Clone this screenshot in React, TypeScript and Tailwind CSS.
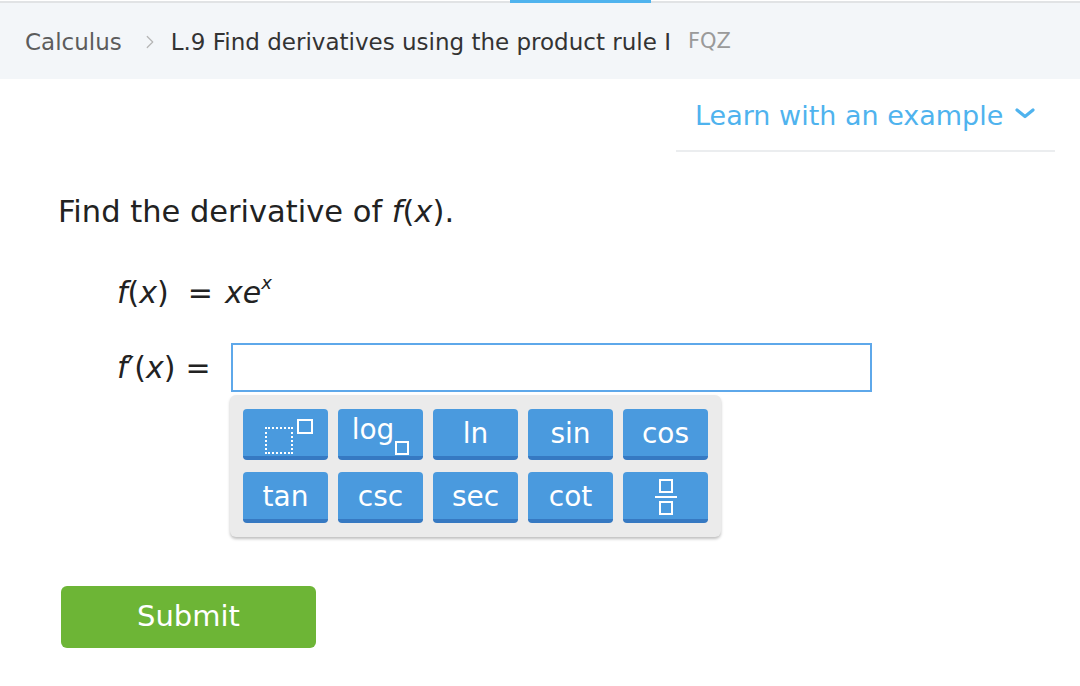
import { ChevronRight } from 'lucide-react'

const keys = ['pow', 'log', 'ln', 'sin', 'cos', 'tan', 'csc', 'sec', 'cot', 'frac']

function KeyFace({ k }: { k: string }) {
  if (k === 'pow') {
    return (
      <div className="relative w-[50px] h-[40px]">
        <div className="absolute left-[4px] top-[13px] w-[28px] h-[27px] border-2 border-dotted border-white" />
        <div className="absolute left-[36px] top-[5px] w-[16px] h-[15px] border-2 border-white" />
      </div>
    )
  }
  if (k === 'log') {
    return (
      <div className="flex items-end">
        <span className="leading-none mb-[8px]">log</span>
        <span className="w-[14px] h-[14px] border-2 border-white ml-[1px] mb-[-3px]" />
      </div>
    )
  }
  if (k === 'frac') {
    return (
      <div className="flex flex-col items-center gap-[3px]">
        <span className="w-[14px] h-[14px] border-2 border-white" />
        <span className="w-[22px] h-[2px] bg-white" />
        <span className="w-[14px] h-[14px] border-2 border-white" />
      </div>
    )
  }
  return <span className="leading-none">{k}</span>
}

export default function App() {
  return (
    <div className="w-[1080px] h-[686px] bg-white overflow-hidden font-['DejaVu_Sans',Verdana,sans-serif]">
      {/* top strip */}
      <div className="h-[3px] border-b-[2px] border-[#e1e3e5] flex">
        <div className="ml-[510px] w-[141px] h-[3px] bg-[#4fb3ee]" />
      </div>

      {/* breadcrumb */}
      <div className="h-[76px] bg-[#f3f6f9] flex items-center pl-[25px] pt-[2px] text-[23px]">
        <span className="text-[#5c5c5c]">Calculus</span>
        <ChevronRight className="w-[22px] h-[24px] text-[#b5b5b5] ml-[17px] mr-[10px]" strokeWidth={1.3} />
        <span className="text-[#333]">L.9 Find derivatives using the product rule I</span>
        <span className="text-[#9a9a9a] ml-[17px] text-[21px]">FQZ</span>
      </div>

      {/* learn with an example */}
      <div className="flex justify-end pr-[25px] mt-[21px]">
        <div className="w-[379px] border-b-2 border-[#ebedef] pb-[18px] flex items-center pl-[19px]">
          <span className="text-[27px] leading-[32px] text-[#4fb3ee]">Learn with an example</span>
          <svg className="ml-[12px] mt-[-4px]" width="20" height="12" viewBox="0 0 20 12">
            <path d="M2 2 L10 8.5 L18 2" fill="none" stroke="#4fb3ee" strokeWidth="3.2" strokeLinecap="round" strokeLinejoin="round" />
          </svg>
        </div>
      </div>

      {/* question */}
      <div className="pl-[58px] mt-[42px]">
        <p className="text-[30.5px] leading-[36px] text-[#222]">
          Find the derivative of <i>f</i>(<i>x</i>).
        </p>

        <div className="pl-[59px] mt-[45px] text-[30px] leading-[36px] text-[#222] flex items-start">
          <span><i>f</i>(<i>x</i>)</span>
          <span className="ml-[19px]">=</span>
          <span className="ml-[12px]"><i>xe</i></span>
          <i className="text-[18px] leading-[18px] -mt-[1px]">x</i>
        </div>

        <div className="pl-[59px] mt-[32px] flex items-start">
          <div className="w-[114px] flex items-center h-[49px] text-[30px] text-[#222]">
            <span><i>f</i>′(<i>x</i>)</span>
            <span className="ml-[10px]">=</span>
          </div>
          <div className="flex flex-col">
            <div className="w-[641px] h-[49px] border-2 border-[#5ea8ea] bg-white" />
            <div className="w-[491px] mt-[3px] -ml-[1px] bg-[#ebebeb] rounded-[6px] shadow-[0_2px_3px_rgba(0,0,0,0.25)] pt-[14px] pb-[14px] px-[13px] grid grid-cols-5 gap-x-[10px] gap-y-[12px]">
              {keys.map(k => (
                <div
                  key={k}
                  className="h-[51px] pt-[3px] rounded-[4px] bg-[#4a9ade] border-b-[4px] border-[#3679c2] flex items-center justify-center text-white text-[28px]"
                >
                  <KeyFace k={k} />
                </div>
              ))}
            </div>
          </div>
        </div>

        <button className="mt-[49px] ml-[3px] w-[255px] h-[62px] rounded-[6px] bg-[#6db536] text-white text-[29px]">
          Submit
        </button>
      </div>
    </div>
  )
}
